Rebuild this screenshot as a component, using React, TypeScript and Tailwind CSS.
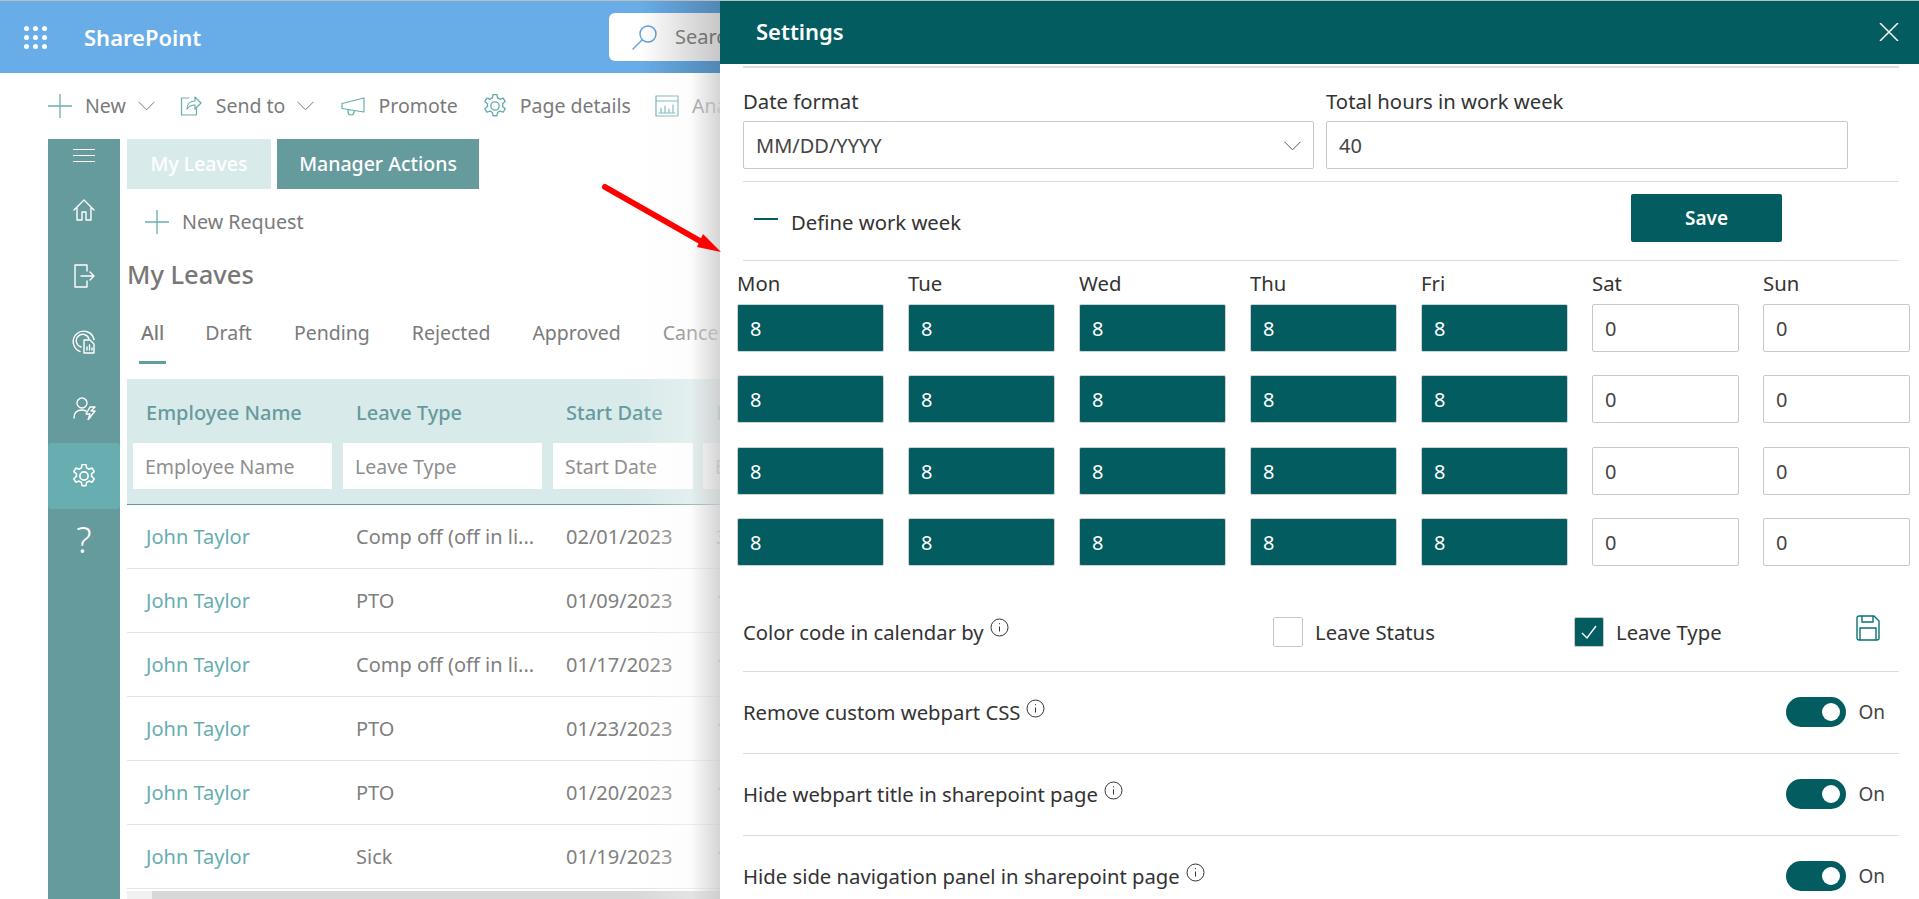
import { type ReactNode } from "react";

const teal = "#68adb0";

const leaveRows = [
  { type: "Comp off (off in li...", date: "02/01/2023", days: "3" },
  { type: "PTO", date: "01/09/2023", days: "1" },
  { type: "Comp off (off in li...", date: "01/17/2023", days: "1" },
  { type: "PTO", date: "01/23/2023", days: "1" },
  { type: "PTO", date: "01/20/2023", days: "1" },
  { type: "Sick", date: "01/19/2023", days: "1" },
];

const days = ["Mon", "Tue", "Wed", "Thu", "Fri", "Sat", "Sun"];
const weeks = [0, 1, 2, 3];

const Icon = ({ children, size = 24, color = "currentColor", width = 1.4, box = "0 0 24 24" }: { children: ReactNode; size?: number; color?: string; width?: number; box?: string }) => (
  <svg width={size} height={size} viewBox={box} fill="none" stroke={color} strokeWidth={width} strokeLinecap="round" strokeLinejoin="round" className="shrink-0">
    {children}
  </svg>
);

const GearPath = () => (
  <>
    <path d="M10.3 2h3.4l.6 3a7.5 7.5 0 0 1 2 1.1l2.9-1 1.7 3-2.3 2a7.5 7.5 0 0 1 0 2.3l2.3 2-1.7 3-2.9-1a7.5 7.5 0 0 1-2 1.1l-.6 3h-3.4l-.6-3a7.5 7.5 0 0 1-2-1.1l-2.9 1-1.7-3 2.3-2a7.5 7.5 0 0 1 0-2.3l-2.3-2 1.7-3 2.9 1a7.5 7.5 0 0 1 2-1.1z" />
    <circle cx="12" cy="12" r="3.6" />
  </>
);

const PlusIcon = () => (
  <svg width="24" height="24" viewBox="0 0 24 24" fill="none" stroke={teal} strokeWidth="1.3" className="shrink-0">
    <path d="M12 0v24M0 12h24" />
  </svg>
);

const Chevron = ({ color = "#7a7a7a" }: { color?: string }) => (
  <svg width="17" height="10" viewBox="0 0 17 10" fill="none" stroke={color} strokeWidth="1" className="shrink-0">
    <path d="M.5.8 8.5 8.8 16.5.8" />
  </svg>
);

const CommandItem = ({ icon, label, chevron, className }: { icon: ReactNode; label: string; chevron?: boolean; className?: string }) => (
  <div className={`flex items-center shrink-0 ${className ?? ""}`}>
    {icon}
    <span className="ml-[13px] text-[19.5px] text-[#7a7a7a] whitespace-nowrap">{label}</span>
    {chevron && <span className="ml-[12px]"><Chevron /></span>}
  </div>
);

const RailCell = ({ children, active }: { children: ReactNode; active?: boolean }) => (
  <div className={`h-[66px] flex items-center justify-center text-white ${active ? "bg-[#68adb0] rounded-[3px] mt-[2px]" : ""}`}>{children}</div>
);

const InfoDot = () => (
  <svg width="19" height="19" viewBox="0 0 19 19" fill="none" stroke="#333" strokeWidth="1" className="ml-[6px] -mt-[8px] shrink-0">
    <circle cx="9.5" cy="9.5" r="8.5" />
    <path d="M9.5 8.5v5M9.5 5.2v1" />
  </svg>
);

const ToggleRow = ({ label }: { label: string }) => (
  <div className="h-[82px] border-b border-[#dcdcdc] flex items-center justify-between pr-[14px]">
    <div className="flex items-center text-[20.3px] text-[#333]">
      {label}
      <InfoDot />
    </div>
    <div className="flex items-center">
      <div className="w-[60px] h-[30px] rounded-full bg-[#035c60] flex items-center justify-end pr-[6px]">
        <div className="w-[18px] h-[18px] rounded-full bg-white" />
      </div>
      <span className="ml-[12px] text-[19px] text-[#444]">On</span>
    </div>
  </div>
);

const LeftPage = () => (
  <div className="w-[720px] shrink-0 overflow-hidden">
    <div className="h-[72px] bg-[#68ade8] flex items-center">
      <div className="ml-[24px] shrink-0 grid grid-cols-[5px_5px_5px] gap-[4px] w-[23px]">
        {Array.from({ length: 9 }).map((_, i) => (
          <span key={i} className="w-[5px] h-[5px] rounded-full bg-white" />
        ))}
      </div>
      <span className="ml-[37px] w-[117px] shrink-0 text-[22px] font-semibold text-white whitespace-nowrap">SharePoint</span>
      <div className="ml-[408px] w-[300px] h-[48px] shrink-0 bg-white rounded-[6px] flex items-center pl-[22px]">
        <svg width="28" height="28" viewBox="0 0 28 28" fill="none" stroke="#5f9fd8" strokeWidth="1.4" strokeLinecap="round">
          <circle cx="17" cy="11" r="8" />
          <path d="M11 17 2 26" />
        </svg>
        <span className="ml-[16px] text-[20px] text-[#8a8a8a]">Search</span>
      </div>
    </div>

    <div className="h-[66px] flex items-center pl-[48px]">
      <CommandItem icon={<PlusIcon />} label="New" chevron />
      <CommandItem
        className="ml-[24px]"
        label="Send to"
        chevron
        icon={
          <Icon color={teal} width={1.2}>
            <path d="M10 4H2.5v17h15v-7M8 15c0-5 3-8 8-8V3l6 6-6 6v-4c-3 0-6 1-8 4z" />
          </Icon>
        }
      />
      <CommandItem
        className="ml-[27px]"
        label="Promote"
        icon={
          <Icon color={teal} width={1.2}>
            <path d="M1 9.5 23 4v14L1 14.5zM7 15.5v2.5a3 3 0 0 0 6 0v-1" />
          </Icon>
        }
      />
      <CommandItem
        className="ml-[25px]"
        label="Page details"
        icon={
          <Icon color={teal} width={1.2} box="1.5 1.5 21 21">
            <GearPath />
          </Icon>
        }
      />
      <CommandItem
        className="ml-[24px]"
        label="Analytics"
        icon={
          <Icon color={teal} width={1.2}>
            <path d="M1 2h22v20H1zM1 7h22M6 18v-4M10 18v-6M14 18v-3M18 18v-7M4 19h16" />
          </Icon>
        }
      />
    </div>

    <div className="flex pl-[48px] h-[760px]">
      <div className="w-[72px] shrink-0 bg-[#659b9d]">
        <div className="h-[38px] flex flex-col items-center pt-[10px] gap-[5px]">
          <span className="w-[22px] h-[1px] bg-white" />
          <span className="w-[22px] h-[1px] bg-white" />
          <span className="w-[22px] h-[1px] bg-white" />
        </div>
        <RailCell>
          <Icon>
            <path d="M2 12 12 2l10 10M5 10v12h5v-8h4v8h5V10" />
          </Icon>
        </RailCell>
        <RailCell>
          <Icon>
            <path d="M15 7V1H3v22h12v-6M9 12h13M18 8l4 4-4 4" />
          </Icon>
        </RailCell>
        <RailCell>
          <Icon>
            <path d="M8 21.5A10.5 10.5 0 1 1 22 9.5M9 17a6.5 6.5 0 1 1 8-8" />
            <path d="M12 10h6l4 4v9H12zM15 20v-3M17.5 20v-5M20 20v-2" />
          </Icon>
        </RailCell>
        <RailCell>
          <Icon>
            <circle cx="10" cy="7" r="5" />
            <path d="M2 22c0-5 3-8 8-8 2 0 3 .5 4 1M23 11h-5l-4 7h4l-2 6 7-9h-4z" />
          </Icon>
        </RailCell>
        <RailCell active>
          <Icon box="1.5 1.5 21 21">
            <GearPath />
          </Icon>
        </RailCell>
        <RailCell>
          <span className="text-[36px] font-light leading-none -mt-[4px]">?</span>
        </RailCell>
      </div>

      <div className="ml-[7px] flex-1 min-w-0">
        <div className="flex gap-[6px] h-[50px]">
          <div className="w-[144px] bg-[#d9eaea] flex items-center justify-center text-[19.5px] font-medium text-white">My Leaves</div>
          <div className="w-[202px] bg-[#659b9d] flex items-center justify-center text-[19.5px] font-medium text-white">Manager Actions</div>
        </div>
        <div className="h-[66px] flex items-center pl-[18px]">
          <PlusIcon />
          <span className="ml-[13px] text-[19.7px] text-[#7a7a7a]">New Request</span>
        </div>
        <div className="h-[38px] text-[25.5px] leading-[38px] font-medium text-[#777]">My Leaves</div>
        <div className="h-[71px] pt-[25px] pl-[12px] flex gap-[42px] text-[19.5px] text-[#7a7a7a] whitespace-nowrap">
          <div className="h-[46px] -mr-[3px] border-b-[3px] border-[#659b9d] px-[2px] font-medium">All</div>
          <span>Draft</span>
          <span>Pending</span>
          <span>Rejected</span>
          <span>Approved</span>
          <span>Cancelled</span>
        </div>
        <div className="mt-[15px] h-[126px] bg-[#d9eaea] border-b border-[#659b9d] pl-[6px]">
          <div className="grid grid-cols-[210px_210px_150px_1fr] h-[64px] items-center pt-[4px] text-[20px] font-medium text-[#659b9d] whitespace-nowrap">
            <span className="pl-[13px]">Employee Name</span>
            <span className="pl-[13px]">Leave Type</span>
            <span className="pl-[13px]">Start Date</span>
            <span className="pl-[13px]">End Date</span>
          </div>
          <div className="grid grid-cols-[210px_210px_150px_1fr] text-[19.5px] text-[#8f8f8f] whitespace-nowrap">
            <div className="w-[199px] h-[46px] bg-white pl-[12px] pt-[2px] flex items-center">Employee Name</div>
            <div className="w-[199px] h-[46px] bg-white pl-[12px] pt-[2px] flex items-center">Leave Type</div>
            <div className="w-[140px] h-[46px] bg-white pl-[12px] pt-[2px] flex items-center">Start Date</div>
            <div className="w-[199px] h-[46px] bg-white pl-[12px] pt-[2px] flex items-center">End Date</div>
          </div>
        </div>
        {leaveRows.map((row, i) => (
          <div key={i} className="grid grid-cols-[210px_210px_150px_1fr] h-[64px] items-center border-b border-[#e4e4e4] pl-[6px] text-[20px] text-[#808080] whitespace-nowrap">
            <span className="pl-[13px] text-[#68adb0]">John Taylor</span>
            <span className="pl-[13px]">{row.type}</span>
            <span className="pl-[13px]">{row.date}</span>
            <span className="pl-[13px]">{row.days}</span>
          </div>
        ))}
        <div className="mt-[2px] h-[10px] flex">
          <div className="w-[25px] bg-[#f1f1f1]" />
          <div className="flex-1 bg-[#d8d8d8]" />
        </div>
      </div>
    </div>
  </div>
);

const SettingsPanel = () => (
  <div className="w-[1199px] shrink-0 bg-white overflow-hidden">
    <div className="h-[63px] bg-[#035c60] flex items-center justify-between pl-[36px] pr-[20px] pb-[2px]">
      <span className="text-[22px] font-semibold text-white">Settings</span>
      <svg width="20" height="18" viewBox="0 0 20 18" fill="none" stroke="white" strokeWidth="1.5">
        <path d="M1 0l18 18M19 0 1 18" />
      </svg>
    </div>
    <div className="pl-[23px] pr-[20px]">
      <div className="mt-[2px] h-[116px] border-t-[2px] border-b border-[#dcdcdc] flex gap-[12px] pt-[19px]">
        <div className="w-[571px]">
          <div className="h-[28px] leading-[28px] text-[20.3px] text-[#333]">Date format</div>
          <div className="mt-[6px] h-[48px] border border-[#c8c8c8] rounded-[2px] flex items-center justify-between pl-[12px] pr-[12px] pt-[2px] text-[20px] text-[#444]">
            MM/DD/YYYY
            <Chevron color="#555" />
          </div>
        </div>
        <div className="w-[522px]">
          <div className="h-[28px] leading-[28px] text-[20.3px] text-[#333]">Total hours in work week</div>
          <div className="mt-[6px] h-[48px] border border-[#c8c8c8] rounded-[2px] flex items-center pl-[12px] pt-[2px] text-[20px] text-[#444]">40</div>
        </div>
      </div>
      <div className="h-[79px] border-b border-[#dcdcdc] flex items-center justify-between pl-[11px] pr-[117px]">
        <div className="flex items-center">
          <span className="w-[24px] h-[2px] -mt-[4px] bg-[#035c60]" />
          <span className="ml-[13px] mt-[2px] text-[20.3px] text-[#333]">Define work week</span>
        </div>
        <div className="w-[151px] h-[48px] -mt-[6px] bg-[#035c60] rounded-[2px] flex items-center justify-center text-[19px] font-semibold text-white">Save</div>
      </div>

      <div className="-ml-[6px] w-[1173px] grid grid-cols-7 gap-x-[24px]">
        {days.map((day) => (
          <div key={day} className="h-[43px] leading-[44px] text-[20.3px] text-[#333]">{day}</div>
        ))}
      </div>
      <div className="-ml-[6px] w-[1173px] grid grid-cols-7 gap-x-[24px] gap-y-[23.3px]">
        {weeks.map((week) =>
          days.map((day, i) =>
            i < 5 ? (
              <div key={`${week}-${day}`} className="h-[48px] bg-[#035c60] border border-[#d0d0d0] rounded-[2px] flex items-center pl-[12px] pt-[2px] text-[20px] text-white">8</div>
            ) : (
              <div key={`${week}-${day}`} className="h-[48px] border border-[#c8c8c8] rounded-[2px] flex items-center pl-[12px] pt-[2px] text-[20px] text-[#444]">0</div>
            )
          )
        )}
      </div>

      <div className="h-[106px] border-b border-[#dcdcdc] pt-[50px] grid grid-cols-[530px_301px_282px_1fr]">
        <div className="flex items-center h-[32px] text-[20.3px] text-[#333]">
          Color code in calendar by
          <InfoDot />
        </div>
        <div className="flex items-center h-[32px]">
          <span className="w-[30px] h-[30px] border border-[#c8c8c8] rounded-[2px]" />
          <span className="ml-[12px] text-[20.3px] text-[#333]">Leave Status</span>
        </div>
        <div className="flex items-center h-[32px]">
          <span className="w-[30px] h-[30px] bg-[#035c60] border border-[#c8c8c8] rounded-[2px] flex items-center justify-center">
            <svg width="18" height="18" viewBox="0 0 18 18" fill="none" stroke="white" strokeWidth="1.4">
              <path d="M2 10l5 5 9-12" />
            </svg>
          </span>
          <span className="ml-[12px] text-[20.3px] text-[#333]">Leave Type</span>
        </div>
        <div className="-mt-[1px]">
          <svg width="24" height="26" viewBox="0 0 24 26" fill="none" stroke="#0b7276" strokeWidth="1.4">
            <path d="M1 3a2 2 0 0 1 2-2h15l5 5v17a2 2 0 0 1-2 2H3a2 2 0 0 1-2-2zM6 1v6h11V1M4 25V13h16v12" />
          </svg>
        </div>
      </div>

      <ToggleRow label="Remove custom webpart CSS" />
      <ToggleRow label="Hide webpart title in sharepoint page" />
      <ToggleRow label="Hide side navigation panel in sharepoint page" />
    </div>
  </div>
);

const App = () => (
  <div className="relative w-[1919px] h-[899px] overflow-hidden bg-white border-t border-[#bdbdbd] flex font-['Noto_Sans',sans-serif]">
    <LeftPage />
    <SettingsPanel />

    {/* panel shadow falling on the page behind */}
    <div className="absolute left-[640px] top-0 w-[80px] h-[72px] bg-[linear-gradient(to_right,rgba(0,0,0,0),rgba(0,0,0,0.22))]" />
    <div className="absolute left-[635px] top-[72px] w-[85px] h-[827px] bg-[linear-gradient(to_right,rgba(255,255,255,0),rgba(248,248,248,0.35)_65%,rgba(205,205,205,0.85))]" />

    <svg width="125" height="75" viewBox="0 0 125 75" className="absolute left-[600px] top-[180px]" fill="none">
      <path d="M5 6 100 60" stroke="#ff0000" strokeWidth="6" strokeLinecap="round" />
      <path d="M121 71 103 53 97 66z" fill="#ff0000" />
    </svg>
  </div>
);

export default App;
